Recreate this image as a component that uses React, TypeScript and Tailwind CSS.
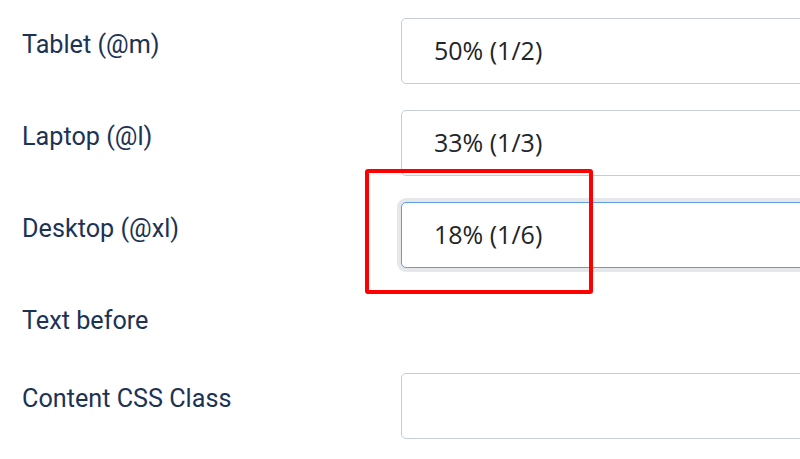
import React from "react";

const labelCls =
  "w-[379px] shrink-0 pt-[11px] text-[25.2px] leading-[32px] text-[#1c3354]";
const inputCls =
  "flex h-[66px] flex-1 items-center rounded-[5px] border border-[#c5ccd8] bg-white pl-[32px] text-[25px] text-[#212529]";

function Row({ label, value, focused }: { label: string; value?: string; focused?: boolean }) {
  return (
    <div className="flex items-start">
      <div className={labelCls} style={{ fontFamily: "Roboto, sans-serif" }}>
        {label}
      </div>
      <div
        className={
          focused
            ? "flex h-[66px] flex-1 items-center rounded-[5px] border border-[#5e9ee3] bg-white pl-[32px] text-[25px] text-[#212529] shadow-[0_0_0_4px_#e6e7ea]"
            : inputCls
        }
        style={{ fontFamily: '"Open Sans", sans-serif' }}
      >
        {value}
      </div>
    </div>
  );
}

export default function App() {
  return (
    <div className="relative h-[459px] w-[800px] overflow-hidden bg-white">
      <div className="flex w-[830px] flex-col gap-[26px] pl-[22px] pt-[18px]">
        <Row label="Tablet (@m)" value="50% (1/2)" />
        <Row label="Laptop (@l)" value="33% (1/3)" />
        <Row label="Desktop (@xl)" value="18% (1/6)" focused />
        <div className="flex h-[53px] items-start">
          <div className={labelCls} style={{ fontFamily: "Roboto, sans-serif" }}>
            Text before
          </div>
        </div>
        <div className="flex items-start">
          <div
            className="w-[379px] shrink-0 pt-[10px] text-[25.2px] leading-[32px] text-[#1c3354]"
            style={{ fontFamily: "Roboto, sans-serif" }}
          >
            Content CSS Class
          </div>
          <div className={inputCls} />
        </div>
      </div>
      <div className="absolute left-[365px] top-[169px] h-[125px] w-[228px] rounded-[3px] border-[4px] border-[#ff0000]" />
    </div>
  );
}
